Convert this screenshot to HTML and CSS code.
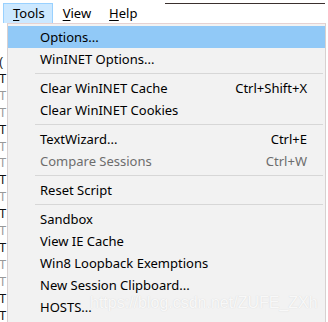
FILE: index.html
```html
<!DOCTYPE html>
<html>
<head>
<meta charset="utf-8">
<link rel="stylesheet" href="styles.css">
</head>
<body>
<div class="menubar">
  <div class="mb-item active"><span class="ul">T</span>ools</div>
  <div class="mb-item"><span class="ul">V</span>iew</div>
  <div class="mb-item"><span class="ul">H</span>elp</div>
  <div class="mb-line"></div>
</div>
<div class="main">
  <div class="strip">
    <span class="dk">(</span>
    <span class="dk">T</span>
    <span class="lt">T</span>
    <span class="lt">T</span>
    <span class="dk">T</span>
    <span class="lt">T</span>
    <span class="lt">T</span>
    <span class="dk">T</span>
    <span class="lt">T</span>
    <span class="dk">T</span>
    <span class="lt">T</span>
    <span class="dk">T</span>
    <span class="lt">T</span>
    <span class="lt">T</span>
    <span class="dk">T</span>
    <span class="dk">T</span>
  </div>
  <div class="menu">
    <div class="row hl"><span>Options...</span></div>
    <div class="row"><span>WinINET Options...</span></div>
    <div class="sep"></div>
    <div class="row"><span>Clear WinINET Cache</span><span>Ctrl+Shift+X</span></div>
    <div class="row"><span>Clear WinINET Cookies</span></div>
    <div class="sep"></div>
    <div class="row"><span>TextWizard...</span><span>Ctrl+E</span></div>
    <div class="row dis"><span>Compare Sessions</span><span>Ctrl+W</span></div>
    <div class="sep"></div>
    <div class="row"><span>Reset Script</span></div>
    <div class="sep"></div>
    <div class="row"><span>Sandbox</span></div>
    <div class="row"><span>View IE Cache</span></div>
    <div class="row"><span>Win8 Loopback Exemptions</span></div>
    <div class="row"><span>New Session Clipboard...</span></div>
    <div class="row"><span>HOSTS...</span></div>
    <div class="row"><span>&nbsp;</span></div>
  </div>
</div>
<div class="watermark">https://blog.csdn.net/ZUFE_ZXh</div>
</body>
</html>
```
FILE: styles.css
```css
html, body {
  margin: 0;
  padding: 0;
  background: #ffffff;
  width: 328px;
  height: 322px;
  overflow: hidden;
  font-family: "Noto Sans", "Open Sans", sans-serif;
  font-size: 13px;
  color: #000;
  position: relative;
}
.menubar {
  height: 23px;
  display: flex;
  align-items: flex-start;
  padding-left: 3px;
  box-sizing: border-box;
  position: relative;
}
.mb-item {
  margin-top: 3px;
  height: 20px;
  box-sizing: border-box;
  border: 1px solid transparent;
  border-bottom: none;
  padding: 0 7px 0 9px;
  line-height: 18px;
}
.mb-item.active {
  background: #cce8ff;
  border-color: #99d1ff;
}
.ul {
  text-decoration: underline;
  text-underline-offset: 2px;
}
.mb-line {
  flex: 1;
  height: 1px;
  background: #3a302e;
  margin-top: 3px;
  margin-left: 20px;
  margin-right: 3px;
}
.main {
  display: flex;
  align-items: flex-start;
}
.strip {
  width: 7px;
  overflow: hidden;
  display: flex;
  flex-direction: column;
  padding-top: 31px;
  font-family: "Liberation Sans", sans-serif;
  font-size: 12px;
  line-height: 16.9px;
}
.strip span {
  margin-left: -1px;
}
.strip .dk { color: #111; }
.strip .lt { color: #999; }
.menu {
  width: 319px;
  box-sizing: border-box;
  background: #f2f2f2;
  border: 1px solid #d8d0d0;
  border-top-color: #e6d2d2;
  border-bottom: none;
  padding-top: 2px;
  height: 299px;
  overflow: hidden;
}
.row {
  height: 22px;
  display: flex;
  justify-content: space-between;
  align-items: center;
  padding: 0 18px 0 32px;
  white-space: nowrap;
}
.row.hl {
  background: #91c9f7;
}
.row.dis {
  color: #6d6d6d;
}
.sep {
  height: 7px;
  display: flex;
  align-items: center;
  padding: 0 2px 0 27px;
}
.sep::before {
  content: "";
  flex: 1;
  height: 1px;
  background: #d7d7d7;
}
.watermark {
  position: absolute;
  left: 90px;
  top: 294px;
  font-family: "Liberation Sans", sans-serif;
  font-size: 16px;
  color: rgba(255, 255, 255, 0.85);
  text-shadow: 0 0 1px rgba(150, 150, 150, 0.35);
  white-space: nowrap;
}
```
